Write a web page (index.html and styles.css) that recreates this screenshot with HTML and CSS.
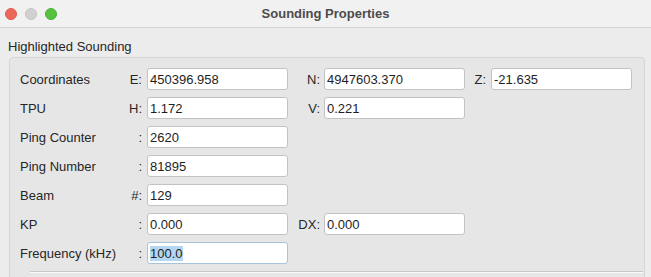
FILE: index.html
```html
<!DOCTYPE html>
<html lang="en">
<head>
  <meta charset="UTF-8">
  <title>Sounding Properties</title>
  <link rel="stylesheet" href="styles.css">
</head>
<body>
  <header class="titlebar">
    <div class="lights">
      <span class="light red"></span>
      <span class="light grey"></span>
      <span class="light green"></span>
    </div>
    <h1>Sounding Properties</h1>
  </header>
  <section class="content">
    <div class="group-title">Highlighted Sounding</div>
    <div class="group">
      <div class="row">
        <span class="name">Coordinates</span>
        <span class="key">E:</span>
        <input class="field" type="text" value="450396.958">
        <span class="key">N:</span>
        <input class="field" type="text" value="4947603.370">
        <span class="key">Z:</span>
        <input class="field" type="text" value="-21.635">
      </div>
      <div class="row">
        <span class="name">TPU</span>
        <span class="key">H:</span>
        <input class="field" type="text" value="1.172">
        <span class="key">V:</span>
        <input class="field" type="text" value="0.221">
      </div>
      <div class="row">
        <span class="name">Ping Counter</span>
        <span class="key">:</span>
        <input class="field" type="text" value="2620">
      </div>
      <div class="row">
        <span class="name">Ping Number</span>
        <span class="key">:</span>
        <input class="field" type="text" value="81895">
      </div>
      <div class="row">
        <span class="name">Beam</span>
        <span class="key">#:</span>
        <input class="field" type="text" value="129">
      </div>
      <div class="row">
        <span class="name">KP</span>
        <span class="key">:</span>
        <input class="field" type="text" value="0.000">
        <span class="key">DX:</span>
        <input class="field" type="text" value="0.000">
      </div>
      <div class="row">
        <span class="name">Frequency (kHz)</span>
        <span class="key">:</span>
        <div class="field focus"><span class="sel">100.0</span></div>
      </div>
      <div class="sep"></div>
    </div>
  </section>
</body>
</html>
```

FILE: styles.css
```css
*{margin:0;padding:0;box-sizing:border-box}
body{font-family:'Liberation Sans',Arial,sans-serif;font-size:13px;color:#262626;background:#ececec;height:277px;overflow:hidden}
.titlebar{height:28px;background:#f2f1f1;border-bottom:1px solid #d3d3d3;display:flex;align-items:center;position:relative}
.lights{display:flex;gap:8px;padding-left:5px}
.light{width:12px;height:12px;border-radius:50%}
.light.red{background:#ec675b;border:1px solid #de5a4e}
.light.grey{background:#d1d1d1;border:1px solid #c4c4c4}
.light.green{background:#54c23f;border:1px solid #47b134}
.titlebar h1{position:absolute;left:0;right:0;text-align:center;font-size:13px;font-weight:700;color:#4c4c4c;line-height:27px;top:0}
.content{padding-top:11px}
.group-title{padding-left:8px;line-height:15px;margin-bottom:3px}
.group{margin-left:9px;width:636px;background:#e6e6e6;border:1px solid #d5d5d5;border-radius:4px;padding:10px 0 20px 10px}
.row{display:grid;grid-template-columns:98px 29px 141px 36px 141px 26px 141px;height:22px;align-items:center;margin-bottom:7px}
.key{text-align:right;padding-right:5px}
.row .key:nth-of-type(3){padding-right:4px}
.field{height:22px;width:141px;background:#fff;border:1px solid #c3c3c3;border-radius:3px;padding:0 2px;font:13px 'Liberation Sans',Arial,sans-serif;color:#1e1e1e;outline:none;display:flex;align-items:center}
.field.focus{border-color:#a9c3da}
.sel{background:#b4d6f0}
.sep{margin:0 0 0 10px;width:613px;border-top:1px solid #c9c9c9;border-bottom:1px solid #fafafa}
```
